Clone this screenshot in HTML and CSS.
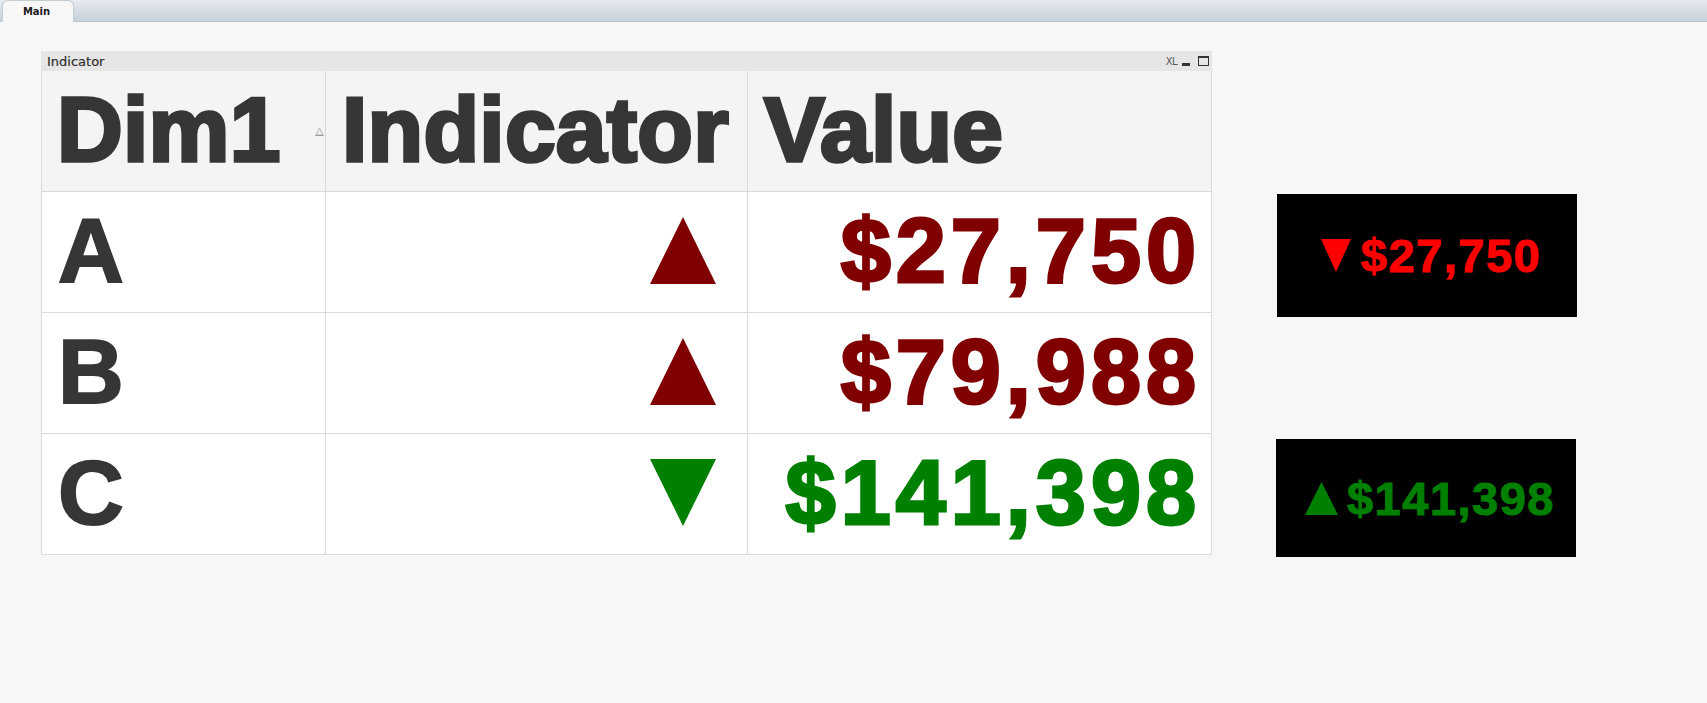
FILE: index.html
```html
<!DOCTYPE html>
<html>
<head>
<meta charset="utf-8">
<title>Main</title>
<link rel="stylesheet" href="styles.css">
</head>
<body>
<div class="tabbar"><div class="tab">Main</div></div>
<div class="sheet">
  <div class="obj">
    <div class="caption">
      <span class="cap-title">Indicator</span>
      <div class="cap-tools">
        <span class="xl">XL</span>
        <span class="min"></span>
        <span class="max"></span>
      </div>
    </div>
    <div class="grid">
      <div class="cell head first"><span>Dim1</span><svg class="sort" width="9" height="9" viewBox="0 0 9 9"><polygon points="4.5,1 8,8 1,8" fill="#f0f0f0" stroke="#b4b4b4" stroke-width="1"/><line x1="0.5" y1="8.5" x2="8.5" y2="8.5" stroke="#9a9a9a"/></svg></div>
      <div class="cell head">Indicator</div>
      <div class="cell head">Value</div>

      <div class="cell dim">A</div>
      <div class="cell ind"><svg width="66" height="67" viewBox="0 0 66 67"><polygon points="33,0 66,67 0,67" fill="#800000"/></svg></div>
      <div class="cell val red">$27,750</div>

      <div class="cell dim">B</div>
      <div class="cell ind"><svg width="66" height="67" viewBox="0 0 66 67"><polygon points="33,0 66,67 0,67" fill="#800000"/></svg></div>
      <div class="cell val red">$79,988</div>

      <div class="cell dim">C</div>
      <div class="cell ind"><svg width="66" height="67" viewBox="0 0 66 67"><polygon points="0,0 66,0 33,67" fill="#008000"/></svg></div>
      <div class="cell val green">$141,398</div>
    </div>
  </div>
  <div class="side">
    <div class="kpi k1">
      <svg width="30" height="33" viewBox="0 0 30 33"><polygon points="0,0 30,0 15,33" fill="#ff0000"/></svg>
      <span class="kpi-text red-bright">$27,750</span>
    </div>
    <div class="kpi k2">
      <svg width="33" height="33" viewBox="0 0 33 33"><polygon points="16.5,0 33,33 0,33" fill="#008000"/></svg>
      <span class="kpi-text green">$141,398</span>
    </div>
  </div>
</div>
</body>
</html>
```

FILE: styles.css
```css
html, body {
  margin: 0;
  padding: 0;
}
body {
  background: #f7f7f7;
  width: 1707px;
  height: 703px;
  overflow: hidden;
  font-family: "Liberation Sans", Arial, sans-serif;
}

.tabbar {
  height: 21px;
  border-bottom: 1px solid #b9c4cd;
  background: linear-gradient(to bottom, #e6ebef 0%, #d6dee5 50%, #c6d1da 100%);
  display: flex;
  align-items: flex-start;
}
.tab {
  margin-left: 2px;
  width: 72px;
  height: 22px;
  box-sizing: border-box;
  background: #f7f7f7;
  border: 1px solid #c3ccd3;
  border-bottom: none;
  border-radius: 6px 6px 0 0;
  font-family: "DejaVu Sans", Verdana, sans-serif;
  font-weight: bold;
  font-size: 10px;
  color: #1a1a1a;
  display: flex;
  align-items: center;
  justify-content: center;
  padding-right: 3px;
}

.sheet {
  display: flex;
  align-items: flex-start;
  padding: 29px 0 0 41px;
}

.obj {
  width: 1171px;
}
.caption {
  height: 20px;
  background: #e6e6e6;
  display: flex;
  align-items: center;
  justify-content: space-between;
  padding: 0 3px 0 6px;
  box-sizing: border-box;
}
.cap-title {
  font-family: "DejaVu Sans", Verdana, sans-serif;
  font-size: 13px;
  color: #2e2e2e;
  line-height: 1;
  padding-top: 1px;
  -webkit-text-stroke: 0.2px #2e2e2e;
}
.cap-tools {
  display: flex;
  align-items: center;
  gap: 4px;
}
.xl {
  font-family: "DejaVu Sans Condensed", "DejaVu Sans", sans-serif;
  font-size: 11px;
  color: #555;
  line-height: 1;
  letter-spacing: -0.5px;
}
.min {
  width: 8px;
  height: 3px;
  background: #333;
  margin-top: 6px;
  margin-left: 1px;
}
.max {
  width: 11px;
  height: 10px;
  box-sizing: border-box;
  border: 1px solid #333;
  border-top-width: 2px;
  margin-left: 4px;
}

.grid {
  display: grid;
  grid-template-columns: 284px 422px 464px;
  border-left: 1px solid #dadada;
}
.cell {
  height: 121px;
  box-sizing: border-box;
  border-right: 1px solid #dadada;
  border-bottom: 1px solid #dadada;
  background: #ffffff;
  display: flex;
  align-items: center;
  padding-bottom: 3px;
  font-weight: bold;
  line-height: 1;
  white-space: nowrap;
}
.head {
  background: #f4f4f4;
  font-size: 91px;
  color: #363636;
  padding-left: 16px;
  letter-spacing: 0.3px;
  -webkit-text-stroke: 3.5px #363636;
}
.head.first {
  padding-left: 15px;
  justify-content: space-between;
  padding-right: 1px;
}
.sort {
  display: block;
  margin-top: 3px;
}
.dim {
  font-size: 91px;
  color: #363636;
  padding-left: 16px;
  -webkit-text-stroke: 2px #363636;
}
.ind {
  justify-content: flex-end;
  padding-right: 31px;
}
.ind svg {
  display: block;
}
.val {
  justify-content: flex-end;
  padding-right: 10px;
  font-size: 90px;
  letter-spacing: 5px;
  -webkit-text-stroke: 3px currentColor;
}
.red { color: #800000; }
.green { color: #008000; }
.red-bright { color: #ff0000; }

.side {
  margin-left: 65px;
  margin-top: 143px;
  display: flex;
  flex-direction: column;
}
.kpi {
  width: 300px;
  box-sizing: border-box;
  padding-left: 8px;
  background: #000;
  display: flex;
  align-items: center;
  justify-content: center;
  gap: 10px;
}
.kpi svg {
  display: block;
}
.k1 {
  height: 123px;
}
.k2 {
  height: 118px;
  margin-top: 122px;
  margin-left: -1px;
  gap: 9px;
}
.kpi-text {
  font-weight: bold;
  font-size: 47px;
  line-height: 1;
  letter-spacing: 1.5px;
  -webkit-text-stroke: 1px currentColor;
}
```
